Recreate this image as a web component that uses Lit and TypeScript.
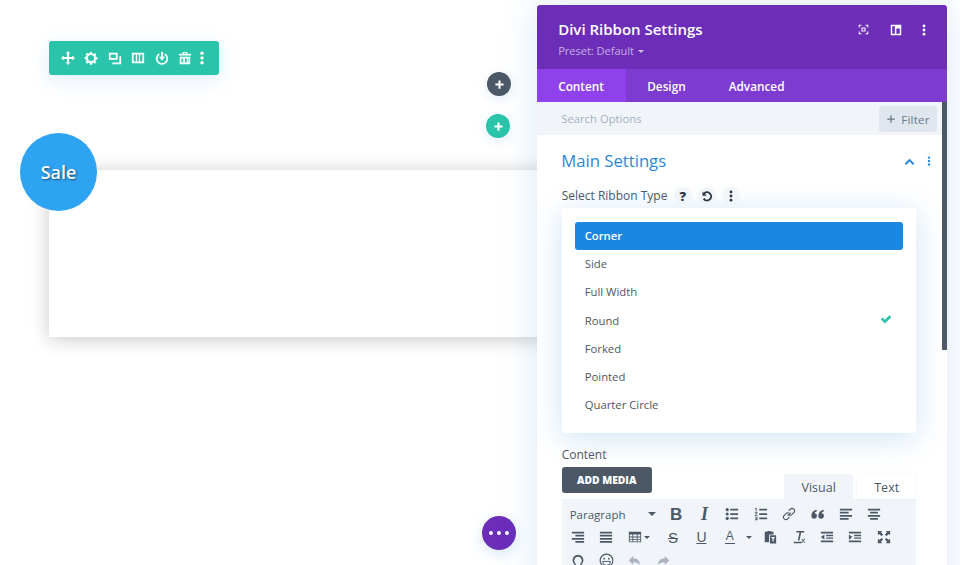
import { LitElement, html, css, svg } from "lit";
import { customElement } from "lit/decorators.js";

const ic = (body: unknown, size = 14, vb = "0 0 16 16") =>
  html`<svg width=${size} height=${size} viewBox=${vb} fill="currentColor">${body}</svg>`;

const toolbarIcons = [
  svg`<path d="M8 0 10.800 3.200H9.100V6.900H12.800V5.200L16 8 12.800 10.800V9.100H9.100V12.800H10.800L8 16 5.200 12.800H6.900V9.100H3.200V10.800L0 8 3.200 5.200V6.900H6.900V3.200H5.200Z"/>`,
  svg`<path fill-rule="evenodd" d="M6.800 1h2.400l.4 1.800 1.200.5 1.600-1 1.700 1.700-1 1.600.5 1.200 1.800.4v2.400l-1.800.4-.5 1.200 1 1.600-1.700 1.700-1.600-1-1.200.5-.4 1.800H6.800l-.4-1.800-1.200-.5-1.600 1-1.700-1.700 1-1.600-.5-1.200L.6 9.200V6.800l1.800-.4.5-1.200-1-1.600 1.700-1.700 1.600 1 1.200-.5ZM8 4.500a3.500 3.500 0 1 0 0 7 3.500 3.500 0 0 0 0-7Z"/>`,
  svg`<path d="M1 2h10v8H1Zm2 2v4h6V4Z" fill-rule="evenodd"/><path d="M13 6h2v9H5v-2h8Z"/>`,
  svg`<path fill-rule="evenodd" d="M1 2h14v12H1Zm2 2v8h2.500V4Zm4 0v8h2V4Zm3.500 0v8H13V4Z"/>`,
  svg`<path d="M4.500 2.600 5.500 4.400a5 5 0 1 0 5 0l1-1.800a7 7 0 1 1-7 0Z"/><path d="M6.800 1h2.400v5.500h2.300L8 11 4.500 6.500h2.300Z"/>`,
  svg`<path fill-rule="evenodd" d="M5.500 1h5v2H15v2H1V3h4.500Zm1.500 1v1h2V2ZM2 6.500h12V15H2Zm2 2V13h2V8.500Zm4 0V13h2V8.500Zm3.500 0V13H12V8.500Z"/>`,
  svg`<circle cx="8" cy="2.500" r="2"/><circle cx="8" cy="8" r="2"/><circle cx="8" cy="13.500" r="2"/>`,
];

const row1Icons = [
  svg`<circle cx="2.500" cy="3" r="1.800"/><circle cx="2.500" cy="8" r="1.800"/><circle cx="2.500" cy="13" r="1.800"/><path d="M6 2h9v2H6Zm0 5h9v2H6Zm0 5h9v2H6Z"/>`,
  svg`<path d="M6 2h9v2H6Zm0 5h9v2H6Zm0 5h9v2H6Z"/><path d="M1 1h2v4H2V2H1Zm0 5h3v1L2 9h2v1H1V9l2-2H1Zm0 5h3v4H1v-1h2v-.500H2v-1h1V12H1Z"/>`,
  svg`<path fill="none" stroke="currentColor" stroke-width="1.300" d="M6.500 10 10 6.500M7.500 4.500 9.500 2.500a2.800 2.800 0 0 1 4 4L11.500 8.500a2.800 2.800 0 0 1-3.300.5M8.500 11.500 6.500 13.500a2.800 2.800 0 0 1-4-4L4.500 7.500a2.800 2.800 0 0 1 3.300-.5"/>`,
  svg`<path d="M.5 9.500C.5 6.500 2.500 3.800 6.500 3v2C5 5.500 4.300 6.200 4 7A3.200 3.200 0 1 1 .5 9.500Z"/><path d="M8.500 9.500C8.500 6.500 10.500 3.800 14.500 3v2C13 5.500 12.300 6.200 12 7A3.200 3.200 0 1 1 8.500 9.500Z"/>`,
  svg`<path d="M1 2h14v2H1Zm0 3.500h10v2H1ZM1 9h14v2H1Zm0 3.500h10v2H1Z"/>`,
  svg`<path d="M1 2h14v2H1Zm2.500 3.500h9v2h-9ZM1 9h14v2H1Zm2.500 3.500h9v2h-9Z"/>`,
];

const alignRight = svg`<path d="M1 2h14v2H1Zm4 3.500h10v2H5ZM1 9h14v2H1Zm4 3.500h10v2H5Z"/>`;
const justify = svg`<path d="M1 2h14v2H1Zm0 3.500h14v2H1ZM1 9h14v2H1Zm0 3.500h14v2H1Z"/>`;
const table = svg`<path fill-rule="evenodd" d="M1 2h14v12H1Zm1 3v2.500h3V5Zm4 0v2.500h4V5Zm5 0v2.500h3V5ZM2 8.500V10.500h3v-2Zm4 0v2h4v-2Zm5 0v2h3v-2ZM2 11.500V13h3v-1.500Zm4 0V13h4v-1.500Zm5 0V13h3v-1.500Z"/>`;
const paste = svg`<path d="M2 2h3V1h4v1h3v3H7v9H2Z"/><path fill-rule="evenodd" d="M8 6h7v9.500H8Zm1.500 2v1.500h1.300V13h1.400V9.500h1.300V8Z"/>`;
const clearFmt = svg`<path d="M5 1h9v1.800h-3.500L8.500 12H6.600L8.600 2.800H5ZM2 13.500h9V15H2ZM10.500 10l1 0 1.200 1.500L14 10h1.200l-1.800 2.200 1.800 2.300h-1.100l-1.300-1.600-1.300 1.600h-1.100l1.800-2.300Z"/>`;
const outdent = svg`<path d="M1 2h14v2H1Zm6 3.500h8v1.500H7ZM7 8.500h8V10H7ZM1 12h14v2H1ZM5 5v6L1 8Z"/>`;
const indent = svg`<path d="M1 2h14v2H1Zm6 3.500h8v1.500H7ZM7 8.500h8V10H7ZM1 12h14v2H1ZM1 5v6l4-3Z"/>`;
const full = svg`<path d="M1 1h5L4.500 2.700 7 5.200 5.200 7 2.700 4.500 1 6ZM15 1v5L13.300 4.500 10.800 7 9 5.200 11.500 2.700 10 1ZM1 15v-5L2.700 11.500 5.200 9 7 10.800 4.500 13.300 6 15ZM15 15h-5l1.500-1.700L9 10.800 10.800 9l2.500 2.500L15 10Z"/>`;
const omega = svg`<path d="M5.500 15H3v-1.500l1.300-.3A6.200 6.200 0 1 1 11.700 13.200l1.300.3V15h-2.500v-2.800A4.300 4.300 0 1 0 5.500 12.200Z"/>`;
const smile = svg`<circle cx="8" cy="8" r="6.800" fill="none" stroke="currentColor" stroke-width="1.200"/><circle cx="5.500" cy="6" r="1"/><circle cx="10.500" cy="6" r="1"/><path d="M3.800 9h8.400a4.200 4.200 0 0 1-8.400 0Z" fill="none" stroke="currentColor"/>`;
const undo = svg`<path d="M6.500 2v3.500c5 0 8 2.500 8.500 8.500-1.500-3-4-4-8.500-4v3.500L1 8Z"/>`;
const redo = svg`<path d="M9.500 2v3.500c-5 0-8 2.500-8.500 8.500 1.500-3 4-4 8.500-4v3.500L15 8Z"/>`;
const dots = svg`<circle cx="8" cy="2.500" r="1.900"/><circle cx="8" cy="8" r="1.900"/><circle cx="8" cy="13.500" r="1.900"/>`;
const plus = svg`<path d="M6.500 2h3v4.500H14v3H9.500V14h-3V9.500H2v-3h4.500Z"/>`;

@customElement("app-root")
export class AppRoot extends LitElement {
  static styles = css`
    :host { display: block; position: relative; width: 960px; height: 565px; overflow: hidden; background: #fff; font-family: "Open Sans", "Noto Sans", sans-serif; color: #4c5866; }
    * { box-sizing: border-box; }
    svg { display: block; }

    .toolbar { position: absolute; left: 48.500px; top: 41px; width: 170px; height: 33.500px; background: #29c4a9; border-radius: 3px; box-shadow: 0 5px 20px rgba(43,135,218,.15); display: flex; align-items: center; gap: 9.400px; padding-left: 12.500px; color: #fff; }
    .round { position: absolute; width: 24px; height: 24px; border-radius: 50%; display: grid; place-items: center; color: #fff; box-shadow: 0 3px 12px rgba(43,135,218,.15); }
    .dark { left: 487px; top: 72px; background: #4c5866; }
    .green { left: 486px; top: 114px; background: #29c4a9; }
    .more { position: absolute; left: 482px; top: 516px; width: 34px; height: 34px; border-radius: 50%; background: #6c2eb9; display: flex; align-items: center; justify-content: center; gap: 4px; box-shadow: 0 4px 14px rgba(43,135,218,.2); }
    .more i { width: 4px; height: 4px; border-radius: 50%; background: #fff; }
    .card { position: absolute; left: 48.500px; top: 170px; width: 520px; height: 167px; background: #fff; box-shadow: 0 2px 18px rgba(0,0,0,.22); }
    .sale { position: absolute; left: 20px; top: 133px; width: 77px; height: 77.500px; border-radius: 50%; background: #2ea3f2; color: #fff; display: grid; place-items: center; font-size: 18px; font-weight: 600; text-shadow: 1px 1px 2px rgba(0,0,0,.55); }

    .glow { position: absolute; left: 537px; top: 5px; width: 410px; height: 600px; box-shadow: 0 0 34px rgba(43,135,218,.18); }
    .panel { position: absolute; left: 536.700px; top: 5px; width: 410px; height: 560px; background: #fff; border-radius: 3px 3px 0 0; overflow: hidden; display: flex; flex-direction: column; }
    .head { height: 64px; background: #6c2eb9; color: #fff; padding: 12.500px 17px 0 21.500px; display: flex; justify-content: space-between; flex: none; }
    .title { font-size: 15px; font-weight: 600; line-height: 22px; }
    .preset { font-size: 11px; font-weight: 500; line-height: 16px; margin-top: 3px; color: rgba(255,255,255,.62); display: flex; align-items: center; gap: 4px; }
    .preset::after { content: ""; border: 3px solid transparent; border-top: 3.500px solid rgba(255,255,255,.7); margin-top: 4px; }
    .hicons { display: flex; gap: 21px; padding-top: 6px; height: 24px; }
    .hicons .last { margin-left: -5px; }
    .tabs { height: 33px; background: #7d3bcf; display: flex; flex: none; color: #fff; font-size: 11.800px; font-weight: 600; }
    .tab { height: 33px; line-height: 35px; padding: 0 21.500px; }
    .tab.on { background: #8f42ec; width: 89px; }
    .search { height: 33px; background: #f1f5f9; flex: none; display: flex; align-items: center; justify-content: space-between; padding: 0 9.500px 0 24.500px; font-size: 11.300px; font-weight: 500; color: #a3b0c2; }
    .filter { width: 58.500px; height: 26px; background: #dfe6ed; border-radius: 3px; color: #6b7785; display: flex; align-items: center; justify-content: center; gap: 5px; font-size: 11.500px; font-weight: 500; letter-spacing: .2px; margin-top: 1px; }
    .scroll { position: absolute; right: 0; top: 97px; width: 5px; height: 248px; background: #4c5866; }

    .body { padding: 0 30px 0 25px; flex: 1; }
    .section { height: 52px; display: flex; align-items: center; justify-content: space-between; color: #2b87da; font-size: 16.700px; }
    .section > span { margin-top: -1.500px; margin-left: -.5px; }
    .section-icons { display: flex; align-items: center; gap: 9px; margin-right: -17px; }
    .label { font-size: 12px; font-weight: 500; line-height: 16px; display: flex; align-items: center; gap: 6.300px; height: 22px; margin-top: -2px; }
    .pill { width: 18px; height: 18px; border-radius: 50%; background: #f1f5f9; color: #2d3540; display: grid; place-items: center; font-size: 13px; font-weight: 800; }
    .menu { margin-top: 1px; width: 354px; height: 225px; background: #fff; border-radius: 3px; box-shadow: 0 5px 30px rgba(43,135,218,.23); padding: 14px 13px 0; display: flex; flex-direction: column; }
    .opt { height: 28.300px; line-height: 28.300px; padding: 0 11px 0 10px; font-size: 11.300px; font-weight: 500; color: #4c5866; border-radius: 3px; display: flex; align-items: center; justify-content: space-between; flex: none; }
    .opt.sel { background: #1a88e0; color: #fff; height: 28px; font-weight: 600; }
    .check { color: #29c4a9; margin-top: -3px; }
    .content-label { font-size: 12px; font-weight: 500; line-height: 16px; margin-top: 14px; }
    .editor-top { display: flex; justify-content: space-between; align-items: flex-end; height: 35px; margin-top: 1px; width: 354.500px; }
    .media { width: 90px; height: 26px; margin-bottom: 6px; background: #4c5866; border-radius: 3px; color: #fff; font-size: 10.300px; font-weight: 800; display: grid; place-items: center; }
    .etabs { display: flex; gap: 4px; font-size: 12.500px; }
    .etab { height: 25px; line-height: 27px; text-align: center; border-radius: 3px 3px 0 0; }
    .visual { width: 69px; background: #f1f5f9; }
    .text { width: 59px; background: #fff; box-shadow: 0 0 2px rgba(43,135,218,.15); }
    .tools { width: 354.500px; height: 80px; background: #f1f5f9; display: flex; flex-direction: column; padding: 3.500px 0 0 2px; overflow: hidden; color: #4c5866; }
    .trow { display: flex; align-items: center; height: 23px; flex: none; }
    .para { width: 97.700px; padding: 0 5px 0 6px; font-size: 11.500px; font-weight: 500; display: flex; justify-content: space-between; align-items: center; }
    .para::after, .drop::after { content: ""; border: 4px solid transparent; border-top: 4px solid #4c5866; margin-top: 4px; }
    .ti { width: 28.400px; display: flex; justify-content: center; align-items: center; flex: none; }
    .drop::after { border-width: 3px; margin: 3px -8px 0 2px; }
    .drop.t { margin-right: 10px; }
    .drop.c { margin-right: 12px; }
    .drop.c::after { margin: 3px -17px 0 11px; }
    .b { font-family: "Liberation Sans", sans-serif; font-weight: 700; font-size: 17px; line-height: 16px; margin: 1px 0 0 1px; }
    .i { font-family: "Liberation Serif", serif; font-style: italic; font-weight: 700; font-size: 18px; line-height: 16px; margin-left: 1px; }
    .s { font-family: "Liberation Sans", sans-serif; font-size: 15px; text-decoration: line-through; }
    .u { font-family: "Liberation Sans", sans-serif; font-size: 14px; text-decoration: underline; }
    .a { font-family: "Liberation Sans", sans-serif; font-size: 12px; border-bottom: 1.500px solid #4c5866; line-height: 13px; padding: 0 1px; }
    .faded { color: #aab3bf; }
  `;

  private options = ["Corner", "Side", "Full Width", "Round", "Forked", "Pointed", "Quarter Circle"];

  render() {
    return html`
      <div class="toolbar">${toolbarIcons.map((i, n) => html`<div style=${n === 6 ? "margin-left:-6px" : ""}>${ic(i, 14)}</div>`)}</div>
      <div class="round dark">${ic(plus, 11)}</div>
      <div class="round green">${ic(plus, 11)}</div>
      <div class="card"></div>
      <div class="sale">Sale</div>
      <div class="more"><i></i><i></i><i></i></div>
      <div class="glow"></div>

      <div class="panel">
        <div class="head">
          <div>
            <div class="title">Divi Ribbon Settings</div>
            <div class="preset">Preset: Default</div>
          </div>
          <div class="hicons">
            ${ic(svg`<path d="M1 5V1h4v1.500H2.500V5ZM11 1h4v4h-1.500V2.500H11ZM1 11h1.500v2.500H5V15H1ZM13.500 11H15v4h-4v-1.500h2.500Z"/><path fill-rule="evenodd" d="M5 5h6v6H5Zm1.500 1.500v3h3v-3Z"/>`, 11)}
            ${ic(svg`<path fill-rule="evenodd" d="M1 1h14v14H1Zm2 2v10h3.500V3Zm5.500 3v7H13V6Z"/>`, 12)}
            <div class="last">${ic(dots, 12)}</div>
          </div>
        </div>
        <div class="tabs">
          <div class="tab on">Content</div>
          <div class="tab">Design</div>
          <div class="tab">Advanced</div>
        </div>
        <div class="search">
          <span>Search Options</span>
          <div class="filter">${ic(svg`<path d="M7 2h2v5h5v2H9v5H7V9H2V7h5Z"/>`, 10)}<span>Filter</span></div>
        </div>
        <div class="body">
          <div class="section">
            <span>Main Settings</span>
            <div class="section-icons">
              ${ic(svg`<path d="M8 4 15 11 13 13 8 8 3 13 1 11Z"/>`, 11)}
              ${ic(dots, 10)}
            </div>
          </div>
          <div class="label">
            <span>Select Ribbon Type</span>
            <div class="pill">?</div>
            <div class="pill">${ic(svg`<path d="M2 2 2 7.500 7.500 7.500 5.300 5.300A4.200 4.200 0 1 1 4.500 10.800L2.500 12.300A6.700 6.700 0 1 0 3.500 3.500Z"/>`, 12)}</div>
            <div class="pill">${ic(dots, 12)}</div>
          </div>
          <div class="menu">
            ${this.options.map((o, n) => html`
              <div class="opt ${n === 0 ? "sel" : ""}">
                <span>${o}</span>
                ${o === "Round" ? html`<span class="check">${ic(svg`<path d="M1 8.500 3.500 6 6.500 9 12.500 3 15 5.500 6.500 14Z"/>`, 12)}</span>` : ""}
              </div>`)}
          </div>
          <div class="content-label">Content</div>
          <div class="editor-top">
            <div class="media">ADD MEDIA</div>
            <div class="etabs">
              <div class="etab visual">Visual</div>
              <div class="etab text">Text</div>
            </div>
          </div>
          <div class="tools">
            <div class="trow">
              <div class="para">Paragraph</div>
              <div class="ti"><span class="b">B</span></div>
              <div class="ti"><span class="i">I</span></div>
              ${row1Icons.map((r) => html`<div class="ti">${ic(r, 14)}</div>`)}
            </div>
            <div class="trow">
              <div class="ti">${ic(alignRight, 14)}</div>
              <div class="ti">${ic(justify, 14)}</div>
              <div class="ti drop t">${ic(table, 14)}</div>
              <div class="ti"><span class="s">S</span></div>
              <div class="ti"><span class="u">U</span></div>
              <div class="ti drop c"><span class="a">A</span></div>
              <div class="ti">${ic(paste, 14)}</div>
              <div class="ti">${ic(clearFmt, 14)}</div>
              <div class="ti">${ic(outdent, 14)}</div>
              <div class="ti">${ic(indent, 14)}</div>
              <div class="ti">${ic(full, 14)}</div>
            </div>
            <div class="trow">
              <div class="ti">${ic(omega, 14)}</div>
              <div class="ti">${ic(smile, 15)}</div>
              <div class="ti faded">${ic(undo, 13)}</div>
              <div class="ti faded">${ic(redo, 13)}</div>
            </div>
          </div>
        </div>
        <div class="scroll"></div>
      </div>
    `;
  }
}
